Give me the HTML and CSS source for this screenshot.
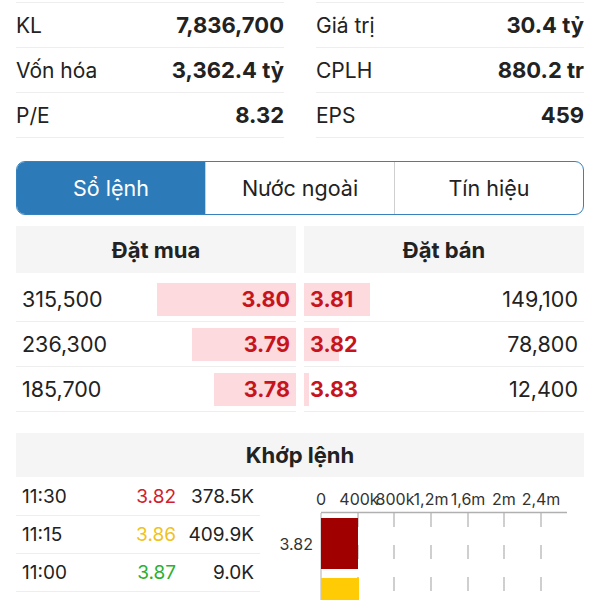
FILE: index.html
```html
<!DOCTYPE html>
<html lang="vi">

<head>
    <meta charset="UTF-8">
    <meta name="viewport" content="width=device-width, initial-scale=1">
    <title>Sổ lệnh</title>
    <link rel="stylesheet" href="styles.css">
</head>

<body>
    <main>
        <div class="stats">
            <div class="stat"><span class="label">KL</span><span class="value">7,836,700</span></div>
            <div class="stat"><span class="label">Giá trị</span><span class="value">30.4 tỷ</span></div>
            <div class="stat"><span class="label">Vốn hóa</span><span class="value">3,362.4 tỷ</span></div>
            <div class="stat"><span class="label">CPLH</span><span class="value">880.2 tr</span></div>
            <div class="stat"><span class="label">P/E</span><span class="value">8.32</span></div>
            <div class="stat"><span class="label">EPS</span><span class="value">459</span></div>
        </div>

        <div class="tabs">
            <div class="tab active">Sổ lệnh</div>
            <div class="tab">Nước ngoài</div>
            <div class="tab">Tín hiệu</div>
        </div>

        <div class="book">
            <div class="side bid">
                <div class="head">Đặt mua</div>
                <div class="row"><span class="bar" style="width: 49.7%"></span><span class="qty">315,500</span><span class="price">3.80</span></div>
                <div class="row"><span class="bar" style="width: 37.2%"></span><span class="qty">236,300</span><span class="price">3.79</span></div>
                <div class="row"><span class="bar" style="width: 29.2%"></span><span class="qty">185,700</span><span class="price">3.78</span></div>
            </div>
            <div class="side ask">
                <div class="head">Đặt bán</div>
                <div class="row"><span class="bar" style="width: 23.5%"></span><span class="price">3.81</span><span class="qty">149,100</span></div>
                <div class="row"><span class="bar" style="width: 12.4%"></span><span class="price">3.82</span><span class="qty">78,800</span></div>
                <div class="row"><span class="bar" style="width: 1.9%"></span><span class="price">3.83</span><span class="qty">12,400</span></div>
            </div>
        </div>

        <div class="match">
            <div class="head">Khớp lệnh</div>
            <div class="match-body">
                <div class="trades">
                    <div class="trade"><span class="time">11:30</span><span class="tprice down">3.82</span><span class="vol">378.5K</span></div>
                    <div class="trade"><span class="time">11:15</span><span class="tprice ref">3.86</span><span class="vol">409.9K</span></div>
                    <div class="trade"><span class="time">11:00</span><span class="tprice up">3.87</span><span class="vol">9.0K</span></div>
                </div>
                <svg class="chart" viewBox="0 0 330 123" width="330" height="123">
                    <g class="axis-labels">
                        <text x="51" y="28">0</text>
                        <text x="89" y="28">400k</text>
                        <text x="125" y="28">800k</text>
                        <text x="161" y="28">1,2m</text>
                        <text x="198" y="28">1,6m</text>
                        <text x="234" y="28">2m</text>
                        <text x="271" y="28">2,4m</text>
                    </g>
                    <line class="axis" x1="51" y1="35.5" x2="297" y2="35.5" />
                    <g class="grid">
                        <line x1="88" y1="36" x2="88" y2="123" />
                        <line x1="124" y1="36" x2="124" y2="123" />
                        <line x1="161" y1="36" x2="161" y2="123" />
                        <line x1="198" y1="36" x2="198" y2="123" />
                        <line x1="234" y1="36" x2="234" y2="123" />
                        <line x1="271" y1="36" x2="271" y2="123" />
                    </g>
                    <line class="base" x1="51" y1="36" x2="51" y2="123" />
                    <rect x="51" y="41" width="37" height="51" fill="#a10000" />
                    <rect x="51" y="101" width="38" height="40" fill="#ffcb05" />
                    <g class="bar-labels">
                        <text x="43" y="69">3.82</text>
                        <text x="43" y="131">3.86</text>
                    </g>
                </svg>
            </div>
        </div>
    </main>
</body>

</html>
```

FILE: styles.css
```css
html,
body {
    margin: 0;
    padding: 0;
    background: #fff;
    color: #222;
    font-family: Inter, "Noto Sans", sans-serif;
}

main {
    height: 600px;
    overflow: hidden;
    box-sizing: border-box;
    padding: 2px 16px 0;
}

.stats {
    display: grid;
    grid-template-columns: 1fr 1fr;
    column-gap: 32px;
}

.stat {
    display: flex;
    justify-content: space-between;
    align-items: center;
    height: 44px;
    border-top: 1px solid #eeeeee;
    font-size: 21px;
}

.stat:nth-last-child(-n+2) {
    border-bottom: 1px solid #eeeeee;
}

.stat .value {
    font-weight: 700;
    font-size: 22px;
}

.tabs {
    display: flex;
    margin-top: 23px;
    height: 54px;
    box-sizing: border-box;
    border: 1.5px solid #3582be;
    border-radius: 9px;
    overflow: hidden;
}

.tab {
    flex: 1;
    display: flex;
    justify-content: center;
    align-items: center;
    font-size: 21.5px;
    color: #222;
    border-left: 1px solid #cfcfcf;
}

.tab:first-child {
    border-left: none;
}

.tab.active {
    background-color: #2c7bb8;
    color: #fff;
}

.book {
    display: flex;
    gap: 8px;
    margin-top: 11px;
}

.side {
    flex: 1;
}

.head {
    display: flex;
    justify-content: center;
    align-items: center;
    height: 47px;
    background-color: #f5f5f5;
    font-size: 22px;
    font-weight: 700;
}

.side .head {
    margin-bottom: 4px;
}

.row {
    position: relative;
    display: flex;
    justify-content: space-between;
    align-items: center;
    height: 44px;
    padding: 0 6px;
    border-bottom: 1px solid #eeeeee;
    font-size: 21.5px;
}

.row .bar {
    position: absolute;
    top: 6px;
    height: 33px;
    background-color: #fddadd;
}

.bid .bar {
    right: 0;
}

.ask .bar {
    left: 0;
}

.row span {
    position: relative;
}

.row .price {
    color: #c6141c;
    font-weight: 700;
}

.match {
    margin-top: 21px;
}

.match .head {
    height: 44px;
}

.match-body {
    display: flex;
    gap: 10px;
}

.trades {
    width: 244px;
}

.trade {
    display: flex;
    align-items: center;
    height: 37px;
    padding: 0 6px;
    border-bottom: 1px solid #eeeeee;
    font-size: 19px;
}

.trade:first-child {
    height: 38px;
}

.trade .time {
    flex: 1;
}

.trade .tprice {
    width: 80px;
    text-align: right;
}

.trade .vol {
    width: 78px;
    text-align: right;
}

.down {
    color: #d0202c;
}

.ref {
    color: #f0c21c;
}

.up {
    color: #2bb02f;
}

.chart {
    display: block;
    margin-right: -16px;
}

.chart text {
    font-family: Inter, "Noto Sans", sans-serif;
    font-size: 16px;
    fill: #333;
}

.axis-labels text {
    text-anchor: middle;
}

.bar-labels text {
    text-anchor: end;
    dominant-baseline: middle;
}

.axis {
    stroke: #b0b0b0;
    stroke-width: 1.5;
}

.grid line {
    stroke: #b0b0b0;
    stroke-width: 1.2;
    stroke-dasharray: 14 18;
}

.base {
    stroke: #b0b0b0;
    stroke-width: 1;
}
```
